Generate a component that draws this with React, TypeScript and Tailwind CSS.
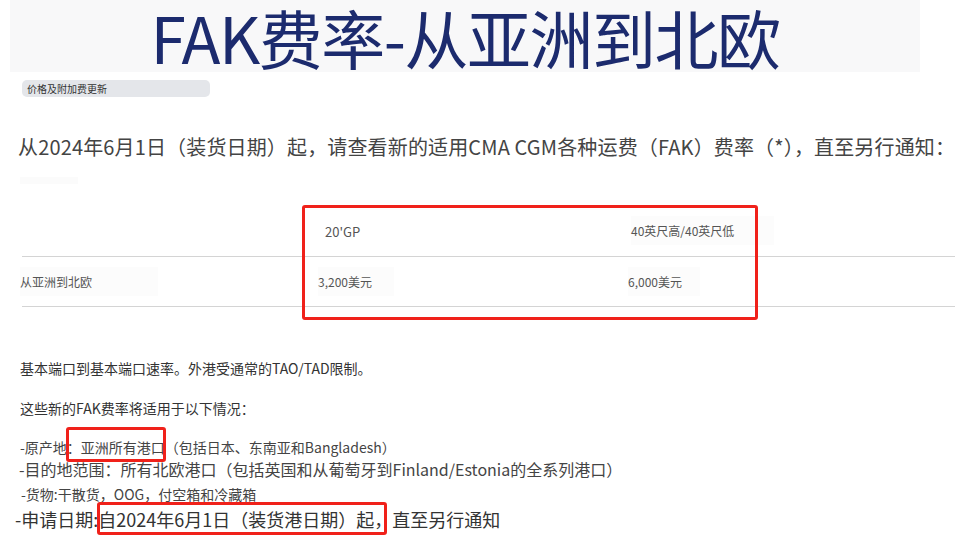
export default function App() {
  return (
    <div
      className="relative w-[955px] h-[540px] overflow-hidden bg-white text-[#444]"
      style={{ fontFamily: '"Noto Sans CJK SC", "Noto Sans", sans-serif' }}
    >
      {/* title banner */}
      <div className="ml-[10px] w-[910px] h-[72px] bg-[#f8f8f9] flex items-center justify-center">
        <h1 className="text-[64px] leading-[72px] text-[#1c2b6e] tracking-[-1.5px]">
          FAK费率-从亚洲到北欧
        </h1>
      </div>

      <div className="mt-[8px] ml-[22px] w-[188px] h-[17px] rounded-[5px] bg-[#e4e6ea] pl-[5px] text-[10px] leading-[17px] text-[#333]">
        价格及附加费更新
      </div>

      <p className="mt-[35px] ml-[18px] text-[20px] leading-[30px] tracking-[0.15px] text-[#444] whitespace-nowrap">
        从2024年6月1日（装货日期）起，请查看新的适用CMA CGM各种运费（FAK）费率（*），直至另行通知：
      </p>

      <div className="h-[7px] w-[58px] ml-[20px] mt-[15px] bg-[#fbfbfb]" />

      {/* rates table */}
      <div className="relative ml-[22px] mt-[22px]">
        <div className="grid grid-cols-[296px_305px_1fr] h-[51px] items-center border-b border-[#d4d4d4] text-[#555]">
          <div />
          <div className="pl-[7px] pt-[2px] text-[13px]">20'GP</div>
          <div className="pl-[8px] text-[12px]">
            <span className="pr-[40px] py-[6px] bg-[#fcfcfc]">40英尺高/40英尺低</span>
          </div>
        </div>
        <div className="grid grid-cols-[296px_305px_1fr] h-[50px] items-center border-b border-[#d4d4d4] text-[12px] text-[#555]">
          <div className="-ml-[2px]">
            <span className="pr-[66px] py-[6px] bg-[#fcfcfc]">从亚洲到北欧</span>
          </div>
          <div>
            <span className="pr-[22px] py-[6px] bg-[#fcfcfc]">3,200美元</span>
          </div>
          <div className="pl-[5px]">
            <span className="pr-[18px] py-[6px] bg-[#fcfcfc]">6,000美元</span>
          </div>
        </div>
        <div className="absolute left-[280px] top-[-1px] w-[456px] h-[115px] border-[3px] border-[#f0211a] rounded-[3px]" />
      </div>

      {/* conditions */}
      <div className="mt-[51px] ml-[20px] text-[14px] leading-[20px] text-[#333]">
        基本端口到基本端口速率。外港受通常的TAO/TAD限制。
      </div>
      <div className="mt-[20px] ml-[20px] text-[14px] leading-[20px] text-[#333]">
        这些新的FAK费率将适用于以下情况：
      </div>

      <div className="mt-[18px] ml-[20px] text-[14px] leading-[22px] text-[#444]">
        -原产地
        <span className="relative">
          ：亚洲所有港口
          <span className="absolute -left-[1px] -right-[1px] -top-[10px] -bottom-[5px] border-[3px] border-[#f0211a] rounded-[3px]" />
        </span>
        （包括日本、东南亚和Bangladesh）
      </div>
      <div className="ml-[19px] text-[16px] leading-[22px] text-[#444] whitespace-nowrap">
        -目的地范围：所有北欧港口（包括英国和从葡萄牙到Finland/Estonia的全系列港口）
      </div>
      <div className="mt-[4px] ml-[21px] text-[14px] leading-[20px] text-[#444]">
        -货物:干散货，OOG，付空箱和冷藏箱
      </div>
      <div className="mt-[2px] ml-[15px] text-[18px] leading-[26px] text-[#333] whitespace-nowrap">
        -申请日期:
        <span className="relative">
          自2024年6月1日（装货港日期）起，
          <span className="absolute -left-[1px] right-[5px] -top-[4px] -bottom-[3px] border-[3px] border-[#f0211a] rounded-[3px]" />
        </span>
        直至另行通知
      </div>
    </div>
  );
}
